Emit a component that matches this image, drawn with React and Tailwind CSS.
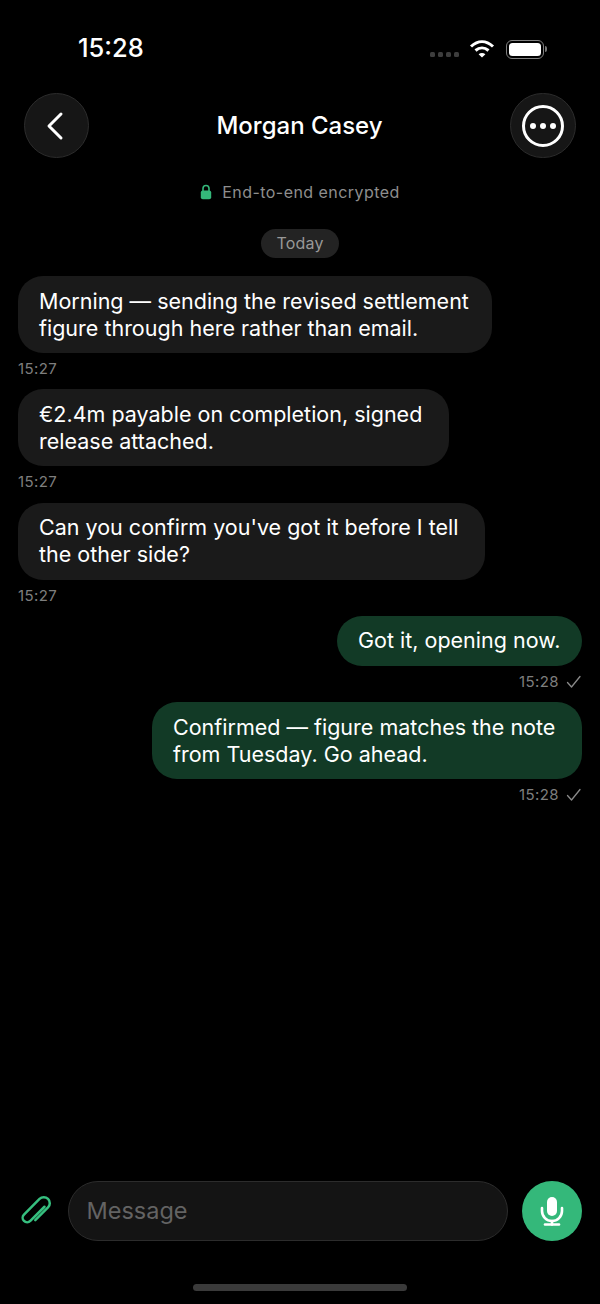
function Incoming({ lines, width }) {
    return (
        <div className="flex flex-col items-start">
            <div className={`${width} bg-[#1a1a1a] rounded-[25px] px-[21px] py-[11.5px] text-[21.5px] leading-[27px] text-white`}>
                {lines.map((l) => <div key={l} className="whitespace-nowrap">{l}</div>)}
            </div>
            <div className="mt-[7px] mb-[-1px] h-[18px] text-[15px] leading-[18px] tracking-[0.4px] text-[#7e7e7e]">15:27</div>
        </div>
    );
}

function Outgoing({ lines, width }) {
    return (
        <div className="flex flex-col items-end">
            <div className={`${width} bg-[#123a26] rounded-[25px] px-[21px] py-[11.5px] text-[21.5px] leading-[27px] text-white`}>
                {lines.map((l) => <div key={l} className="whitespace-nowrap">{l}</div>)}
            </div>
            <div className="mt-[7px] mb-[-1px] h-[18px] flex items-center gap-[7px] text-[15px] leading-[18px] tracking-[0.4px] text-[#7e7e7e]">
                <span>15:28</span>
                <svg width="16" height="14" viewBox="0 0 16 14" fill="none" stroke="#8a8a8a" strokeWidth="1.3" strokeLinecap="round" strokeLinejoin="round">
                    <path d="M1.5 7.5L5.5 12L14 1.5" />
                </svg>
            </div>
        </div>
    );
}

export default function App() {
    return (
        <div className="relative w-[600px] h-[1304px] bg-black flex flex-col font-['Inter',sans-serif] overflow-hidden">
            {/* STATUS BAR */}
            <div className="h-[93px] shrink-0 flex items-start justify-between pl-[78px] pr-[53px] pt-[33px]">
                <div className="text-[25.5px] leading-[30px] font-medium text-white">15:28</div>
                <div className="flex items-center gap-[10px] mt-[6px]">
                    <div className="flex gap-[3px] mt-[11px]">
                        <span className="w-[5px] h-[5px] rounded-[1.5px] bg-[#3d3d3d]"></span>
                        <span className="w-[5px] h-[5px] rounded-[1.5px] bg-[#3d3d3d]"></span>
                        <span className="w-[5px] h-[5px] rounded-[1.5px] bg-[#3d3d3d]"></span>
                        <span className="w-[5px] h-[5px] rounded-[1.5px] bg-[#3d3d3d]"></span>
                    </div>
                    <svg width="26" height="20" viewBox="0 0 26 20" fill="none" stroke="white" strokeWidth="3">
                        <path d="M2 7.5C9 1 17 1 24 7.5" />
                        <path d="M6.5 11.5C10.5 8 15.5 8 19.5 11.5" />
                        <path d="M13 18.5L9.6 15.2C11.6 13.6 14.4 13.6 16.4 15.2Z" fill="white" stroke="none" />
                    </svg>
                    <div className="flex items-center ml-[1px]">
                        <div className="w-[38px] h-[19px] rounded-[6px] border-[1.5px] border-[#808080] p-[2px]">
                            <div className="w-full h-full rounded-[3.5px] bg-white"></div>
                        </div>
                        <div className="w-[2px] h-[6px] rounded-r-[2px] bg-[#777] ml-[1px]"></div>
                    </div>
                </div>
            </div>

            {/* HEADER */}
            <div className="h-[65px] shrink-0 flex items-center justify-between px-[24px]">
                <div className="w-[65px] h-[65px] rounded-full bg-[#161616] border border-[#2c2c2c] flex items-center justify-center">
                    <svg width="20" height="30" viewBox="0 0 20 30" fill="none" stroke="white" strokeWidth="3" strokeLinecap="round" strokeLinejoin="round" className="-ml-[3px]">
                        <path d="M16 3L4 15L16 27" />
                    </svg>
                </div>
                <div className="text-[24px] leading-[30px] font-medium text-white">Morgan Casey</div>
                <div className="w-[66px] h-[65px] rounded-full bg-[#161616] border border-[#2c2c2c] flex items-center justify-center">
                    <div className="w-[42px] h-[42px] rounded-full border-[3px] border-white flex items-center justify-center gap-[4px]">
                        <span className="w-[6px] h-[6px] rounded-full bg-white"></span>
                        <span className="w-[6px] h-[6px] rounded-full bg-white"></span>
                        <span className="w-[6px] h-[6px] rounded-full bg-white"></span>
                    </div>
                </div>
            </div>

            {/* ENCRYPTED */}
            <div className="mt-[23px] h-[22px] shrink-0 flex items-center justify-center gap-[10px] text-[16px] leading-[22px] tracking-[0.45px] text-[#8e8e8e]">
                <svg width="12" height="16" viewBox="0 0 12 16" fill="none">
                    <path d="M3 7V4.5a3 3 0 0 1 6 0V7" stroke="#34b87a" strokeWidth="1.6" />
                    <rect x="0.8" y="6.5" width="10.4" height="8.7" rx="2" fill="#34b87a" />
                </svg>
                <span>End-to-end encrypted</span>
            </div>

            {/* DATE */}
            <div className="mt-[26px] shrink-0 flex justify-center">
                <div className="h-[29px] px-[15.5px] rounded-full bg-[#232323] text-[16px] leading-[29px] tracking-[0.2px] text-[#989898]">Today</div>
            </div>

            {/* MESSAGES */}
            <div className="flex-1 flex flex-col gap-[12.33px] mt-[18px] px-[18px]">
                <Incoming width="w-[474px]" lines={["Morning — sending the revised settlement", "figure through here rather than email."]} />
                <Incoming width="w-[431px]" lines={["€2.4m payable on completion, signed", "release attached."]} />
                <Incoming width="w-[467px]" lines={["Can you confirm you've got it before I tell", "the other side?"]} />
                <Outgoing width="w-[245px]" lines={["Got it, opening now."]} />
                <Outgoing width="w-[430px]" lines={["Confirmed — figure matches the note", "from Tuesday. Go ahead."]} />
            </div>

            {/* INPUT */}
            <div className="shrink-0 h-[60px] flex items-center pl-[18px] pr-[18px]">
                <div className="w-[50px] flex justify-start">
                    <svg width="36" height="36" viewBox="-18 -18 36 36" fill="none" stroke="#36bf7f" strokeWidth="2.5" strokeLinecap="round" strokeLinejoin="round">
                        <path transform="rotate(45)" d="M6 7V-11A6 6 0 0 0 -6 -11V11A4.5 4.5 0 0 0 3 11V-9" />
                    </svg>
                </div>
                <div className="w-[440px] h-[60px] rounded-full bg-[#141414] border border-[#2c2c2c] pl-[17.5px] flex items-center text-[23.5px] text-[#636363]">Message</div>
                <div className="ml-[14px] w-[60px] h-[60px] rounded-full bg-[#34b87a] flex items-center justify-center">
                    <svg width="24" height="30" viewBox="0 0 24 30" fill="none" stroke="white" strokeWidth="2.6" strokeLinecap="round">
                        <rect x="7" y="1" width="10" height="19" rx="5" fill="white" stroke="none" />
                        <path d="M2 12v3a10 10 0 0 0 20 0v-3" />
                        <path d="M12 25V28.5" />
                        <path d="M5 28.5H19" />
                    </svg>
                </div>
            </div>

            {/* HOME INDICATOR */}
            <div className="shrink-0 h-[63px] flex justify-center pt-[43px]">
                <div className="w-[214px] h-[7px] rounded-full bg-[#3a3a3a]"></div>
            </div>
        </div>
    );
}
